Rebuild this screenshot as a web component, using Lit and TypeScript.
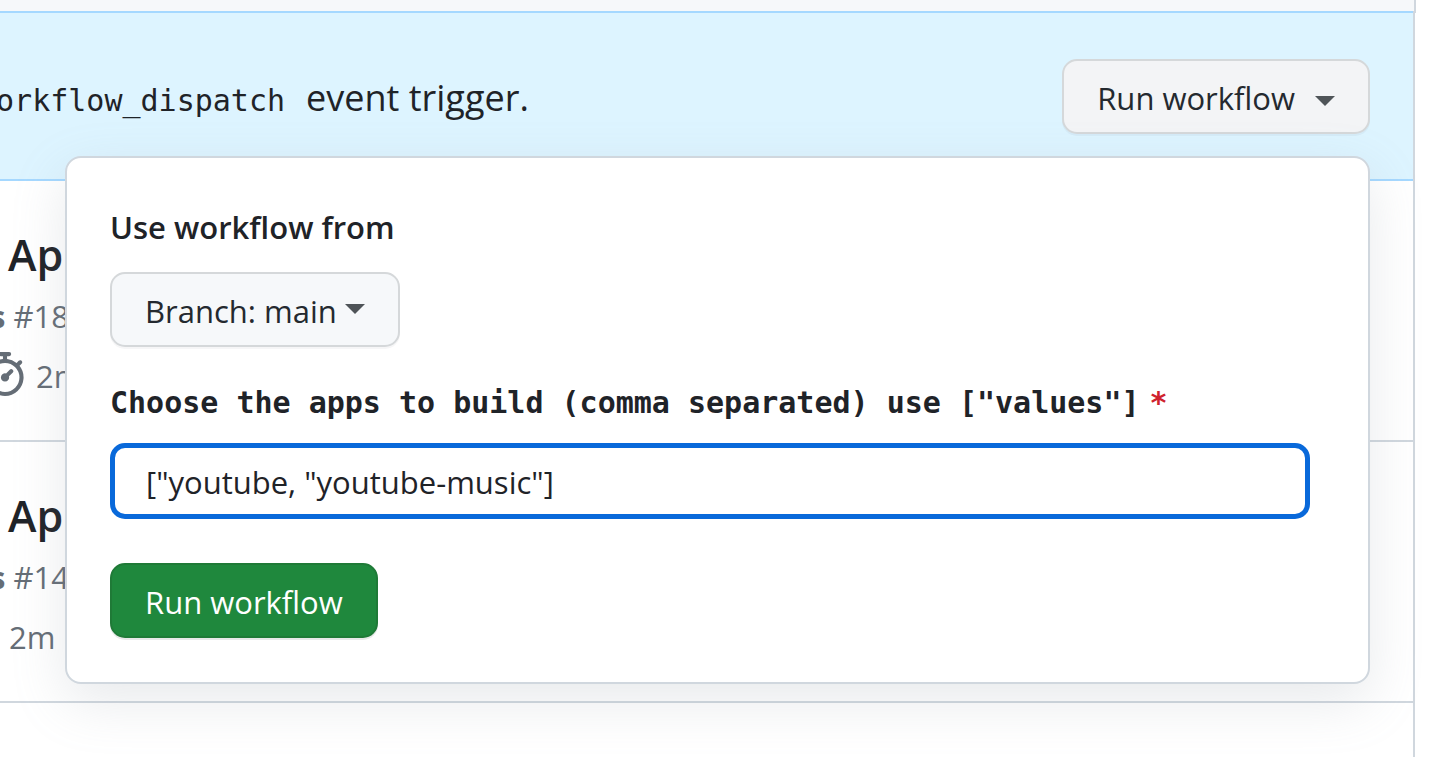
import { LitElement, html, css } from "lit";
import { customElement, property, state } from "lit/decorators.js";

@customElement("run-row")
class RunRow extends LitElement {
  @property() title = "";
  @property() number = "";
  @property() duration = "";
  @property({ type: Boolean }) icon = false;

  static styles = css`
    :host {
      display: block;
      padding: 44px 0 34px;
      border-bottom: 2px solid #d0d7de;
      color: #656d76;
      font-size: 31px;
      line-height: 60px;
      white-space: nowrap;
    }
    .title {
      margin: 0 0 1px 8px;
      color: #1f2328;
      font-size: 43px;
      font-weight: 600;
      line-height: 60px;
    }
    .sub {
      margin-left: -10px;
    }
    .time {
      display: flex;
      align-items: center;
      gap: 9px;
      margin-left: 9px;
    }
    .time.with-icon {
      margin-left: -17px;
    }
    svg {
      width: 44px;
      height: 44px;
      margin-bottom: 4px;
      fill: currentColor;
    }
  `;

  render() {
    return html`
      <h3 class="title">${this.title}</h3>
      <div class="sub"><b>s</b> ${this.number}</div>
      <div class=${this.icon ? "time with-icon" : "time"}>
        ${this.icon
          ? html`<svg viewBox="0 0 16 16" aria-hidden="true">
              <path d="M5.75.75A.75.75 0 0 1 6.5 0h3a.75.75 0 0 1 0 1.5h-.75v1l-.001.041a6.724 6.724 0 0 1 3.464 1.435l.007-.006.75-.75a.749.749 0 0 1 1.275.326.749.749 0 0 1-.215.734l-.75.75-.006.007a6.75 6.75 0 1 1-10.548 0L2.72 5.03l-.75-.75a.751.751 0 0 1 .018-1.042.751.751 0 0 1 1.042-.018l.75.75.007.006A6.72 6.72 0 0 1 7.25 2.541V1.5H6.5a.75.75 0 0 1-.75-.75ZM8 14.5a5.25 5.25 0 1 0 0-10.5 5.25 5.25 0 0 0 0 10.5Zm.389-6.7 1.33-1.33a.75.75 0 1 1 1.061 1.06L9.45 8.861A1.502 1.502 0 0 1 8 10.75a1.499 1.499 0 1 1 .389-2.95Z"></path>
            </svg>`
          : ""}
        <span>${this.duration}</span>
      </div>
    `;
  }
}

@customElement("app-root")
class AppRoot extends LitElement {
  @state() private apps = '["youtube, "youtube-music"]';

  static styles = css`
    :host {
      display: flex;
      flex-direction: column;
      min-height: 100vh;
      overflow: hidden;
      background: #fff;
      color: #1f2328;
      font-family: "Open Sans", "Noto Sans", sans-serif;
      font-size: 31px;
    }
    * {
      box-sizing: border-box;
    }
    .header {
      height: 13px;
      margin-right: 21px;
      background: #f6f8fa;
      border-right: 2px solid #d0d7de;
    }
    .list {
      flex: 1;
      margin: -2px 22px 0 0;
      border-right: 2px solid #d0d7de;
    }
    .banner {
      display: flex;
      align-items: center;
      justify-content: space-between;
      padding: 46px 43px 45px 0;
      background: #ddf4ff;
      border: solid #a5d8ff;
      border-width: 2px 0;
    }
    .message {
      margin: 0 0 0 -22px;
      padding-top: 2px;
      font-size: 36px;
      white-space: nowrap;
    }
    code {
      margin-right: 21px;
      font-family: "DejaVu Sans Mono", monospace;
      font-size: 30px;
    }
    .menu {
      position: relative;
    }
    .btn {
      display: flex;
      align-items: center;
      height: 75px;
      padding: 2px 33px 0;
      border: 2px solid #d5d8da;
      border-radius: 15px;
      background: #f6f8fa;
      box-shadow: 0 2px 0 rgba(31, 35, 40, 0.04);
      color: #24292f;
      font: inherit;
      white-space: nowrap;
    }
    .btn.open {
      gap: 20px;
      background: #f3f4f6;
    }
    .btn.branch {
      gap: 8px;
    }
    .btn.primary {
      border-color: #1f7a37;
      background: #1f883d;
      box-shadow: 0 2px 0 rgba(31, 35, 40, 0.1);
      color: #fff;
    }
    .caret {
      border: 10px solid transparent;
      border-top-color: #4f5458;
      border-bottom: 0;
    }
    .open .caret {
      margin-top: 6px;
    }
    .branch .caret {
      margin-bottom: 4px;
    }
    .panel {
      position: absolute;
      z-index: 1;
      top: calc(100% + 22px);
      right: 0;
      display: flex;
      flex-direction: column;
      align-items: flex-start;
      width: calc(100vw - 132px);
      padding: 43px 58px 44px 43px;
      border: 2px solid #d0d7de;
      border-radius: 16px;
      background: #fff;
      box-shadow: 0 18px 54px rgba(140, 149, 159, 0.2);
    }
    .label {
      margin: 0;
      font-size: 31px;
      font-weight: 600;
      line-height: 52px;
      white-space: nowrap;
    }
    .panel .branch {
      margin: 19px 0 28px;
    }
    .mono {
      padding-top: 4px;
      font-family: "DejaVu Sans Mono", monospace;
      font-size: 30px;
      font-weight: 700;
      line-height: 48px;
    }
    .star {
      margin-left: 10px;
      color: #cf222e;
    }
    input {
      width: 100%;
      height: 76px;
      margin: 16px 0 44px;
      padding: 2px 31px 0;
      border: 5px solid #0969da;
      border-radius: 15px;
      outline: 0;
      background: #fff;
      color: #1f2328;
      font: inherit;
    }
  `;

  render() {
    return html`
      <div class="header"></div>
      <main class="list">
        <div class="banner">
          <p class="message"><code>workflow_dispatch</code>event trigger.</p>
          <div class="menu">
            <button class="btn open" type="button" aria-expanded="true">
              Run workflow<span class="caret"></span>
            </button>
            <form class="panel" @submit=${(e: Event) => e.preventDefault()}>
              <p class="label">Use workflow from</p>
              <button class="btn branch" type="button">
                Branch: main<span class="caret"></span>
              </button>
              <label class="label mono" for="apps"
                >Choose the apps to build (comma separated) use ["values"]<span class="star">*</span></label
              >
              <input
                id="apps"
                type="text"
                required
                spellcheck="false"
                .value=${this.apps}
                @input=${(e: InputEvent) => (this.apps = (e.target as HTMLInputElement).value)}
              />
              <button class="btn primary" type="submit">Run workflow</button>
            </form>
          </div>
        </div>
        <run-row title="Ap" number="#18" duration="2m" icon></run-row>
        <run-row title="Ap" number="#14" duration="2m"></run-row>
      </main>
    `;
  }
}
